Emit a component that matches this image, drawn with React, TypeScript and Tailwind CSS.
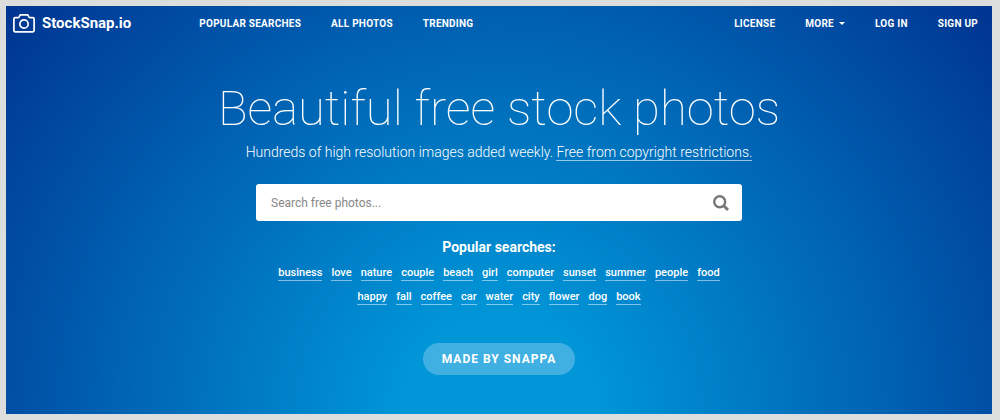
const leftLinks = ['Popular Searches', 'All Photos', 'Trending'];

const popularSearches = [
  'business', 'love', 'nature', 'couple', 'beach', 'girl', 'computer', 'sunset', 'summer', 'people',
  'food', 'happy', 'fall', 'coffee', 'car', 'water', 'city', 'flower', 'dog', 'book',
];

function CameraIcon() {
  return (
    <svg className="w-[22px] h-[19px]" viewBox="0 0 22 19" fill="none" stroke="currentColor" strokeWidth="1.7" aria-hidden="true">
      <path strokeLinejoin="round" d="M2.200 3.600H5.300Q6 3.600 6.300 2.700L6.700 1.700Q7 .9 7.800 .9h6.400q.8 0 1.100.8l.4 1q.3.9 1 .9h3.100q1.300 0 1.300 1.300v11.600q0 1.300-1.300 1.300H2.200Q.9 17.800.9 16.500V4.900q0-1.300 1.300-1.300z" />
      <circle cx="11" cy="10" r="4.200" />
    </svg>
  );
}

function SearchIcon() {
  return (
    <svg className="w-4 h-4" viewBox="0 0 16 16" fill="none" stroke="currentColor" aria-hidden="true">
      <circle cx="6.700" cy="6.700" r="5.500" strokeWidth="2.400" />
      <path d="M10.800 10.800l4.200 4.200" strokeWidth="2.900" />
    </svg>
  );
}

export default function App() {
  return (
    <div className="bg-[#dcdedd] p-[6px] pr-2 font-['Roboto',sans-serif] text-white">
      <div className="bg-[radial-gradient(circle_at_50%_100%,#0096d8_15%,#003491_100%)] pb-[39px]">
        {/* Header */}
        <header className="flex items-center justify-between h-[34px] pl-[7px] pr-[14px]">
          <div className="flex items-center gap-[68px]">
            <a href="#" className="flex items-center gap-[7px] text-[15px] font-bold">
              <CameraIcon />
              StockSnap.io
            </a>
            <nav className="flex gap-[30px] text-[10px] font-bold uppercase tracking-wide">
              {leftLinks.map((label) => (
                <a key={label} href="#">{label}</a>
              ))}
            </nav>
          </div>
          <nav className="flex gap-[30px] text-[10px] font-bold uppercase tracking-wide">
            <a href="#">License</a>
            <button type="button" className="flex items-center gap-[5px] uppercase tracking-wide">
              More
              <svg className="w-[6px] h-[3px]" viewBox="0 0 6 3" fill="currentColor" aria-hidden="true">
                <path d="M0 0h6L3 3z" />
              </svg>
            </button>
            <a href="#">Log In</a>
            <a href="#">Sign Up</a>
          </nav>
        </header>

        {/* Hero */}
        <main className="flex flex-col items-center text-center">
          <h1 className="mt-10 text-[49px] leading-[58px] font-thin">Beautiful free stock photos</h1>
          <p className="mt-[6px] text-sm leading-4 font-light">
            Hundreds of high resolution images added weekly.{' '}
            <a href="#" className="border-b border-white/60">Free from copyright restrictions.</a>
          </p>

          <form className="mt-6 flex w-[486px] max-w-full h-[37px] rounded-[3px] bg-white text-[#777]">
            <input
              type="text"
              aria-label="Search free photos"
              placeholder="Search free photos..."
              className="min-w-0 grow pl-[15px] text-xs placeholder:text-[#888] outline-none"
            />
            <button type="submit" aria-label="Search" className="px-[13px]">
              <SearchIcon />
            </button>
          </form>

          {/* Popular searches */}
          <h2 className="mt-4 text-sm font-bold">Popular searches:</h2>
          <ul className="mt-2 flex flex-wrap justify-center gap-x-[9px] gap-y-2 max-w-[460px] text-[11px] leading-[15px] font-medium">
            {popularSearches.map((term) => (
              <li key={term}>
                <a href="#" className="block border-b border-white/50">{term}</a>
              </li>
            ))}
          </ul>

          <a href="#" className="mt-[38px] px-[19px] rounded-full bg-white/25 text-xs leading-8 font-bold uppercase tracking-[1px]">
            Made by Snappa
          </a>
        </main>
      </div>
    </div>
  );
}
